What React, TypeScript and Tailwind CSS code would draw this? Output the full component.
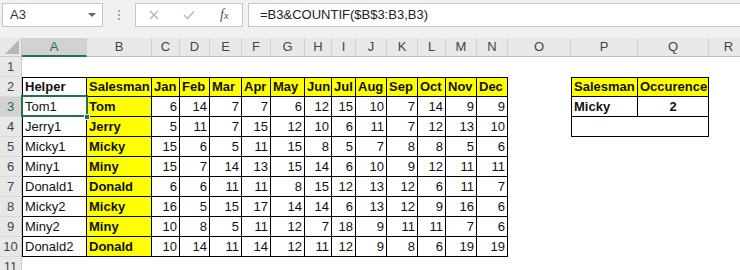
import React from "react";
import clsx from "clsx";

type Col = { k: string; w: string };
const cols: Col[] = [
  { k: "A", w: "w-[65px]" },
  { k: "B", w: "w-[65px]" },
  { k: "C", w: "w-[28px]" },
  { k: "D", w: "w-[30px]" },
  { k: "E", w: "w-[32px]" },
  { k: "F", w: "w-[29px]" },
  { k: "G", w: "w-[34px]" },
  { k: "H", w: "w-[27px]" },
  { k: "I", w: "w-[24px]" },
  { k: "J", w: "w-[31px]" },
  { k: "K", w: "w-[31px]" },
  { k: "L", w: "w-[28px]" },
  { k: "M", w: "w-[31px]" },
  { k: "N", w: "w-[31px]" },
  { k: "O", w: "w-[63px]" },
  { k: "P", w: "w-[67px]" },
  { k: "Q", w: "w-[71px]" },
  { k: "R", w: "w-[40px]" },
];

const months = ["Jan", "Feb", "Mar", "Apr", "May", "Jun", "Jul", "Aug", "Sep", "Oct", "Nov", "Dec"];

const data: [string, string, number[]][] = [
  ["Tom1", "Tom", [6, 14, 7, 7, 6, 12, 15, 10, 7, 14, 9, 9]],
  ["Jerry1", "Jerry", [5, 11, 7, 15, 12, 10, 6, 11, 7, 12, 13, 10]],
  ["Micky1", "Micky", [15, 6, 5, 11, 15, 8, 5, 7, 8, 8, 5, 6]],
  ["Miny1", "Miny", [15, 7, 14, 13, 15, 14, 6, 10, 9, 12, 11, 11]],
  ["Donald1", "Donald", [6, 6, 11, 11, 8, 15, 12, 13, 12, 6, 11, 7]],
  ["Micky2", "Micky", [16, 5, 15, 17, 14, 14, 6, 13, 12, 9, 16, 6]],
  ["Miny2", "Miny", [10, 8, 5, 11, 12, 7, 18, 9, 11, 11, 7, 6]],
  ["Donald2", "Donald", [10, 14, 11, 14, 12, 11, 12, 9, 8, 6, 19, 19]],
];

type CellInfo = {
  text: string;
  bold?: boolean;
  yellow?: boolean;
  align?: "left" | "right" | "center";
  bl?: boolean;
  br?: boolean;
  bt?: boolean;
  bb?: boolean;
};

function cellInfo(row: number, ci: number): CellInfo {
  if (row >= 2 && row <= 10 && ci <= 13) {
    const base: CellInfo = { text: "", br: true, bb: true, bl: ci === 0, bt: row === 2 };
    if (row === 2) {
      if (ci === 0) return { ...base, text: "Helper", bold: true };
      if (ci === 1) return { ...base, text: "Salesman", bold: true, yellow: true };
      return { ...base, text: months[ci - 2], bold: true, yellow: true };
    }
    const d = data[row - 3];
    if (ci === 0) return { ...base, text: d[0] };
    if (ci === 1) return { ...base, text: d[1], bold: true, yellow: true };
    return { ...base, text: String(d[2][ci - 2]), align: "right" };
  }
  if (row >= 2 && row <= 4 && (ci === 15 || ci === 16)) {
    const base: CellInfo = { text: "", bb: true, bt: row === 2, bl: ci === 15, br: ci === 16 || row < 4 };
    if (row === 2) return { ...base, text: ci === 15 ? "Salesman" : "Occurence", bold: true, yellow: true };
    if (row === 3) return ci === 15 ? { ...base, text: "Micky", bold: true } : { ...base, text: "2", bold: true, align: "center" };
    return base;
  }
  return { text: "" };
}

function Cell({ row, ci, col }: { row: number; ci: number; col: Col }) {
  const c = cellInfo(row, ci);
  const selected = row === 3 && ci === 0;
  return (
    <div
      className={clsx(
        "shrink-0 h-full box-border flex items-end pb-[1px] border-black whitespace-nowrap overflow-visible",
        col.w,
        c.yellow ? "bg-[#ffff00]" : "bg-white",
        c.bl && "border-l",
        c.br && "border-r",
        c.bt && "border-t",
        c.bb && "border-b",
        c.align === "right" ? "justify-end pr-[2px]" : c.align === "center" ? "justify-center" : "justify-start pl-[2px]",
        selected && "relative"
      )}
    >
      <span className={clsx("leading-[16px] text-[13px] text-[#111]", c.bold && "font-bold")}>{c.text}</span>
      {selected && (
        <>
          <div className="absolute -left-[2px] -top-[2px] w-[67px] h-[22px] border-2 border-[#217346] pointer-events-none" />
          <div className="absolute -right-[4px] -bottom-[4px] w-[6px] h-[6px] bg-[#217346] border border-white" />
        </>
      )}
    </div>
  );
}

function RowHeader({ n, selected }: { n: number; selected?: boolean }) {
  return (
    <div
      className={clsx(
        "shrink-0 w-[22px] h-full box-border flex items-center justify-center text-[13px] border-b border-r border-b-[#d9d9d9] border-r-[#c8c8c8]",
        selected ? "bg-[#d2d2d2] text-[#217346]" : "bg-[#e8e8e8] text-[#444]"
      )}
    >
      {n}
    </div>
  );
}

export default function App() {
  const rows = [1, 2, 3, 4, 5, 6, 7, 8, 9, 10, 11];
  return (
    <div
      className="w-[740px] h-[270px] overflow-hidden bg-white"
      style={{ fontFamily: '"Liberation Sans", Arial, sans-serif' }}
    >
      <div className="h-[38px] bg-[#f1f1f1] flex items-start">
        <div className="ml-[2px] mt-[3px] w-[101px] h-[24px] box-border bg-white border border-[#c6c6c6] flex items-center justify-between pl-[7px] pr-[6px]">
          <span className="text-[13px] text-[#333]">A3</span>
          <svg width="8" height="5" viewBox="0 0 8 5">
            <path d="M0 0 L8 0 L4 4 Z" fill="#666" />
          </svg>
        </div>
        <div className="ml-[15px] mt-[10px] flex flex-col gap-[2px]">
          <div className="w-[2px] h-[2px] bg-[#a8a8a8]" />
          <div className="w-[2px] h-[2px] bg-[#a8a8a8]" />
          <div className="w-[2px] h-[2px] bg-[#a8a8a8]" />
        </div>
        <div className="ml-[15px] mt-[3px] w-[108px] h-[24px] box-border bg-white border border-[#c6c6c6] flex items-center">
          <div className="w-[36px] flex justify-center">
            <svg width="10" height="10" viewBox="0 0 10 10">
              <path d="M1 1 L9 9 M9 1 L1 9" stroke="#b3b3b3" strokeWidth="1.3" />
            </svg>
          </div>
          <div className="w-[36px] flex justify-center">
            <svg width="12" height="10" viewBox="0 0 12 10">
              <path d="M1 5 L4.5 8.5 L11 1.5" stroke="#b3b3b3" strokeWidth="1.4" fill="none" />
            </svg>
          </div>
          <div className="w-[36px] flex justify-center">
            <span
              className="italic text-[14px] text-[#555] leading-none"
              style={{ fontFamily: '"Liberation Serif", "Times New Roman", serif' }}
            >
              f<span className="text-[11px]">x</span>
            </span>
          </div>
        </div>
        <div className="ml-[5px] mt-[3px] flex-1 h-[24px] box-border bg-white border border-r-0 border-[#c6c6c6] flex items-center pl-[11px]">
          <span className="text-[13px] text-[#222]">=B3&amp;COUNTIF($B$3:B3,B3)</span>
        </div>
      </div>

      <div className="h-[19px] flex">
        <div className="shrink-0 w-[22px] h-full box-border bg-[#e8e8e8] border-b border-r border-[#c8c8c8] flex items-end justify-end pr-[2px] pb-[2px]">
          <svg width="14" height="14" viewBox="0 0 14 14">
            <path d="M14 0 L14 14 L0 14 Z" fill="#b5b5b5" />
          </svg>
        </div>
        {cols.map((c, i) => (
          <div
            key={c.k}
            className={clsx(
              "shrink-0 h-full box-border flex items-center justify-center text-[13px] border-r border-r-[#d0d0d0]",
              c.w,
              i === 0
                ? "bg-[#d2d2d2] text-[#217346] border-b-2 border-b-[#217346]"
                : "bg-[#e8e8e8] text-[#444] border-b border-b-[#bdbdbd]"
            )}
          >
            {c.k}
          </div>
        ))}
      </div>

      {rows.map((r) => (
        <div key={r} className="h-[20px] flex">
          <RowHeader n={r} selected={r === 3} />
          {cols.map((c, i) => (
            <Cell key={c.k} row={r} ci={i} col={c} />
          ))}
        </div>
      ))}
    </div>
  );
}
